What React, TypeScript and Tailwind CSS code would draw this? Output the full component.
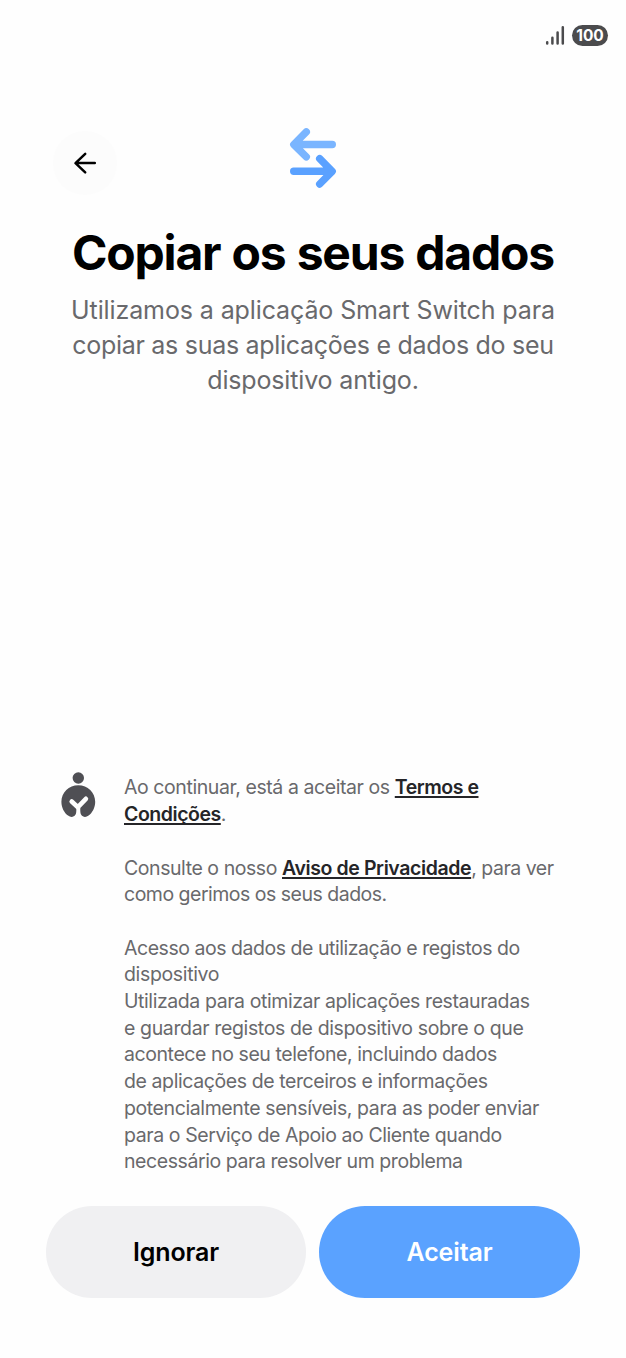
interface TextLine {
  text: string;
  tracking: string;
}

const SUBTITLE: TextLine[] = [
  { text: "Utilizamos a aplicação Smart Switch para", tracking: "tracking-[-0.11px]" },
  { text: "copiar as suas aplicações e dados do seu", tracking: "tracking-[-0.29px]" },
  { text: "dispositivo antigo.", tracking: "tracking-[-0.16px]" },
];

const USAGE_ACCESS: TextLine[] = [
  { text: "Acesso aos dados de utilização e registos do", tracking: "tracking-[-0.46px]" },
  { text: "dispositivo", tracking: "tracking-[-0.35px]" },
  { text: "Utilizada para otimizar aplicações restauradas", tracking: "tracking-[-0.42px]" },
  { text: "e guardar registos de dispositivo sobre o que", tracking: "tracking-[-0.37px]" },
  { text: "acontece no seu telefone, incluindo dados", tracking: "tracking-[-0.42px]" },
  { text: "de aplicações de terceiros e informações", tracking: "tracking-[-0.41px]" },
  { text: "potencialmente sensíveis, para as poder enviar", tracking: "tracking-[-0.4px]" },
  { text: "para o Serviço de Apoio ao Cliente quando", tracking: "tracking-[-0.41px]" },
  { text: "necessário para resolver um problema", tracking: "tracking-[-0.43px]" },
];

const LINK =
  "font-semibold text-[#252528] underline decoration-[1.5px] underline-offset-[2px] [text-decoration-skip-ink:none]";

function StatusBar() {
  return (
    <div className="flex h-[70px] items-center justify-end gap-[7px] pr-[18px]">
      <svg width="20" height="20" viewBox="0 0 20 20" fill="none" stroke="#4b4b4d" strokeWidth="2.5" strokeLinecap="round">
        <path d="M2.2 17.2v1.2M7.4 12.8v5.6M12.6 7.4v11M17.8 2.2v16.2" />
      </svg>
      <div className="flex h-[21px] w-[36px] items-center justify-center rounded-full bg-[#4b4b4d] pt-[1px] text-[15.5px] leading-none font-bold text-white">
        100
      </div>
    </div>
  );
}

function BackButton() {
  return (
    <button className="flex size-[64px] items-center justify-center rounded-full bg-[#fcfcfc]" aria-label="Voltar">
      <svg width="24" height="24" viewBox="0 0 24 24" fill="none" stroke="#000" strokeWidth="2.5" strokeLinecap="round" strokeLinejoin="round">
        <path d="M12.2 2.8 2.5 12.1l9.7 9.3M2.8 12.1h19" />
      </svg>
    </button>
  );
}

function TransferIcon() {
  return (
    <svg width="48" height="62" viewBox="0 0 48 62" fill="none" strokeWidth="7.4" strokeLinecap="round" strokeLinejoin="round">
      <path d="M17.3 4.9 4.8 17.5 17.3 29.8M6 17.5h37.3" stroke="#7ab5ff" />
      <path d="M30.7 31.7 43.2 44.3 30.7 57M42 44.3H4.7" stroke="#5aa1ff" />
    </svg>
  );
}

function PrivacyIcon() {
  return (
    <svg className="mt-[1px]" width="37" height="48" viewBox="0 0 37 48">
      <circle cx="18.3" cy="6" r="5.7" fill="#4f4f54" />
      <path
        d="M18.3 13.2C27.7 13.2 35.2 20.6 35.2 29.8C35.2 35.8 32.2 41 28.6 43.6C25.8 45.6 22.9 45.2 21.2 42.8Q20 41 20.3 36h-4Q16.600 41 15.400 42.800C13.700 45.200 10.800 45.600 8 43.600C4.400 41 1.400 35.800 1.400 29.800C1.400 20.600 8.900 13.200 18.300 13.200z"
        fill="#4f4f54"
      />
      <path d="M11.7 29.5l6.2 5.7 8-8.4" fill="none" stroke="#fefefe" strokeWidth="4.6" strokeLinecap="round" strokeLinejoin="round" />
    </svg>
  );
}

function Lines({ lines }: { lines: TextLine[] }) {
  return (
    <>
      {lines.map((line) => (
        <span key={line.text} className={`block ${line.tracking}`}>
          {line.text}
        </span>
      ))}
    </>
  );
}

export default function App() {
  return (
    <div className="flex h-[1358px] w-[626px] flex-col bg-[#fefefe] font-[Inter,sans-serif]">
      <StatusBar />

      <header className="mt-[57px] grid grid-cols-[1fr_48px_1fr] items-start">
        <div className="pt-[4px] pl-[53px]">
          <BackButton />
        </div>
        <TransferIcon />
      </header>

      <section className="mt-[28px] flex flex-col items-center text-center whitespace-nowrap">
        <h1 className="text-[48px] leading-[60px] font-bold tracking-[-1.2px] text-black [word-spacing:1px]">
          Copiar os seus dados
        </h1>
        <p className="mt-[10px] text-[25px] leading-[35px] text-[#69696c]">
          <Lines lines={SUBTITLE} />
        </p>
      </section>

      <section className="mt-auto flex gap-[27px] pl-[60px] text-[19.5px] leading-[26.7px] whitespace-nowrap text-[#69696c]">
        <PrivacyIcon />
        <div className="pt-[3px]">
          <p className="mb-[26.7px]">
            <span className="tracking-[-0.42px]">Ao continuar, está a aceitar os </span>
            <a className={`${LINK} tracking-[-0.46px]`}>
              Termos e<br />
              Condições
            </a>
            .
          </p>
          <p className="mb-[26.7px]">
            <span className="tracking-[-0.44px]">Consulte o nosso </span>
            <a className={`${LINK} tracking-[-0.4px]`}>Aviso de Privacidade</a>
            <span className="tracking-[-0.48px]">, para ver</span>
            <br />
            <span className="tracking-[-0.5px]">como gerimos os seus dados.</span>
          </p>
          <p>
            <Lines lines={USAGE_ACCESS} />
          </p>
        </div>
      </section>

      <footer className="mt-[31px] mb-[60px] flex gap-[13px] pl-[46px] text-[25px] font-semibold">
        <button className="h-[92px] w-[260px] rounded-full bg-[#f0f0f2] pt-[2px] tracking-[-0.15px] text-black">Ignorar</button>
        <button className="h-[92px] w-[261px] rounded-full bg-[#5aa2ff] pt-[2px] tracking-[-0.15px] text-white">Aceitar</button>
      </footer>
    </div>
  );
}
